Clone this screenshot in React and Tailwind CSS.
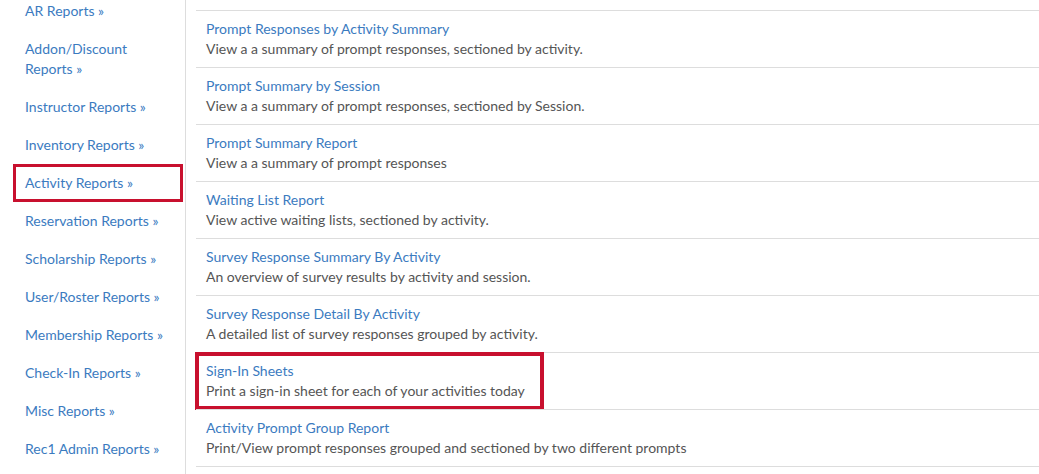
import React from 'react'

const sideLinks = [
  'AR Reports »',
  'Addon/Discount Reports »',
  'Instructor Reports »',
  'Inventory Reports »',
  'Activity Reports »',
  'Reservation Reports »',
  'Scholarship Reports »',
  'User/Roster Reports »',
  'Membership Reports »',
  'Check-In Reports »',
  'Misc Reports »',
  'Rec1 Admin Reports »',
]

const reports = [
  {
    title: 'Prompt Responses by Activity Summary',
    desc: 'View a a summary of prompt responses, sectioned by activity.',
  },
  {
    title: 'Prompt Summary by Session',
    desc: 'View a a summary of prompt responses, sectioned by Session.',
  },
  { title: 'Prompt Summary Report', desc: 'View a a summary of prompt responses' },
  { title: 'Waiting List Report', desc: 'View active waiting lists, sectioned by activity.' },
  {
    title: 'Survey Response Summary By Activity',
    desc: 'An overview of survey results by activity and session.',
  },
  {
    title: 'Survey Response Detail By Activity',
    desc: 'A detailed list of survey responses grouped by activity.',
  },
  {
    title: 'Sign-In Sheets',
    desc: 'Print a sign-in sheet for each of your activities today',
    highlight: true,
  },
  {
    title: 'Activity Prompt Group Report',
    desc: 'Print/View prompt responses grouped and sectioned by two different prompts',
  },
]

const App = () => {
  return (
    <div
      className="flex w-[1039px] h-[474px] overflow-hidden bg-white text-[14px] leading-[20px]"
      style={{ fontFamily: 'Lato, "Open Sans", sans-serif' }}
    >
      {/* sidebar */}
      <aside className="w-[186px] shrink-0 border-r border-[#dddddd] h-full">
        <ul className="-mt-[8px] ml-[13px] w-[170px]">
          {sideLinks.map((label) => (
            <li
              key={label}
              className={`px-[9px] py-[6px] border-[3px] ${
                label === 'Activity Reports »' ? 'border-[#c8102e]' : 'border-transparent'
              }`}
            >
              <a href="#" className="text-[#3b7bbf] block">
                {label}
              </a>
            </li>
          ))}
        </ul>
      </aside>

      {/* main list */}
      <main className="flex-1 pl-[10px] pt-[10px]">
        <div className="border-b border-[#dddddd]">
          {reports.map((r) => (
            <div key={r.title} className="relative border-t border-[#dddddd] pl-[10px] pt-[8px] pb-[8px]">
              <a href="#" className="block text-[#3b7bbf]">
                {r.title}
              </a>
              <p className="text-[#555555]">{r.desc}</p>
              {r.highlight && (
                <span className="absolute -left-[1px] -top-[1px] w-[349px] h-[58px] border-[4px] border-[#c8102e] pointer-events-none" />
              )}
            </div>
          ))}
        </div>
      </main>
    </div>
  )
}

export default App
